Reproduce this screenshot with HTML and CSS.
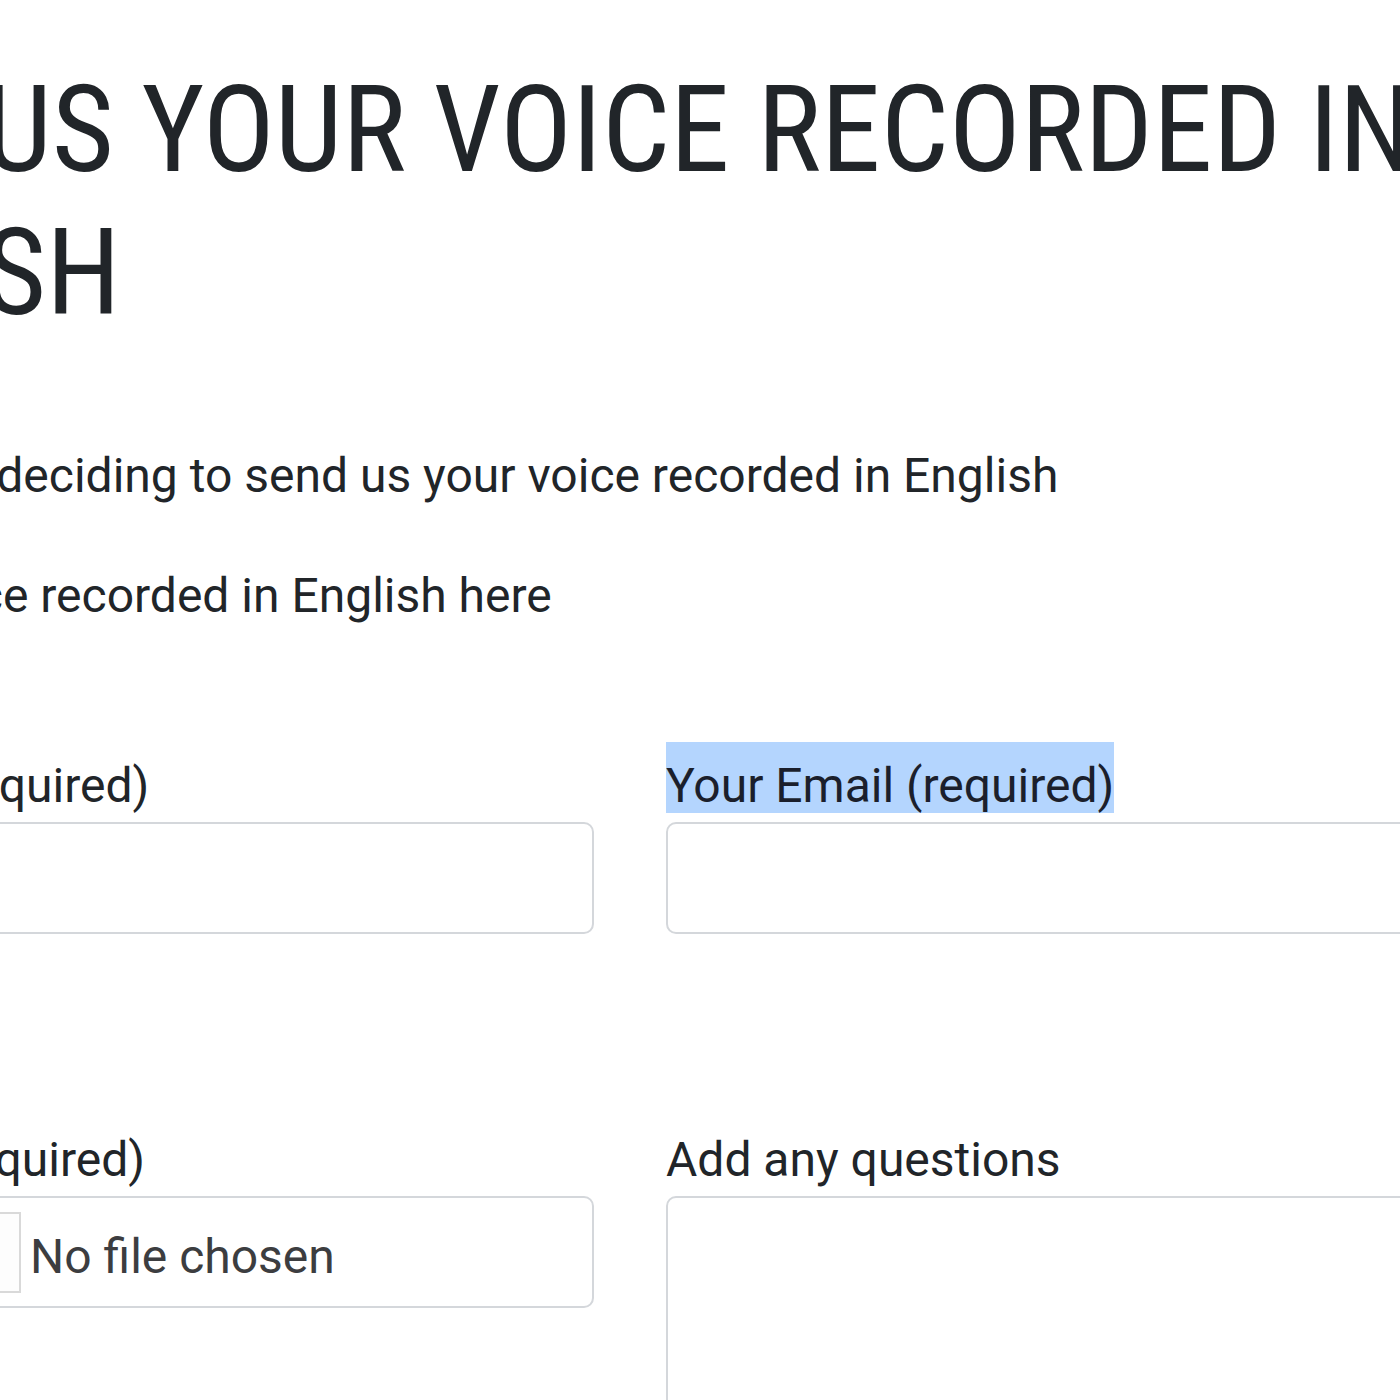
FILE: index.html
```html
<!DOCTYPE html>
<html lang="en">
<head>
<meta charset="utf-8">
<title>Send us your voice recorded in English</title>
<link rel="stylesheet" href="styles.css">
</head>
<body>
<main class="page">
  <h1 class="title">SEND US YOUR VOICE RECORDED IN ENGLISH</h1>
  <p class="intro intro-first">Thank you for deciding to send us your voice recorded in English</p>
  <p class="intro">Send your voice recorded in English here</p>
  <form class="form-grid">
    <div class="field">
      <label class="field-label">Your Name (required)</label>
      <div class="control"></div>
    </div>
    <div class="field">
      <label class="field-label"><span class="selected">Your Email (required)</span></label>
      <div class="control"></div>
    </div>
    <div class="field">
      <label class="field-label">Your Audio (required)</label>
      <div class="control file-control">
        <span class="file-btn">Choose File</span>
        <span class="file-name">No file chosen</span>
      </div>
    </div>
    <div class="field">
      <label class="field-label">Add any questions</label>
      <div class="control textarea"></div>
    </div>
  </form>
</main>
</body>
</html>
```
FILE: styles.css
```css
html, body {
  margin: 0;
  padding: 0;
  overflow: hidden;
  background: #ffffff;
}
body {
  color: #212529;
  font-family: Roboto, "Liberation Sans", sans-serif;
}
.page {
  margin-left: -308px;
  width: 1900px;
  padding-top: 59px;
}
.title {
  margin: 0;
  font-family: "Roboto Condensed", "Liberation Sans Narrow", Roboto, sans-serif;
  font-stretch: condensed;
  font-weight: 400;
  font-size: 120px;
  line-height: 143px;
  width: 1760px;
  color: #212529;
}
.intro {
  margin: 0;
  font-size: 48px;
  line-height: 72px;
}
.intro-first {
  margin-top: 95px;
  margin-bottom: 48px;
}
.form-grid {
  margin-top: 110px;
  display: grid;
  grid-template-columns: 902px 902px;
  column-gap: 72px;
  row-gap: 182px;
}
.field {
  display: flex;
  flex-direction: column;
  align-items: flex-start;
}
.field-label {
  display: inline-block;
  font-size: 48px;
  line-height: 58px;
  padding-top: 15px;
  height: 56px;
  margin-bottom: 9px;
}
.selected {
  display: inline-block;
  background: #b4d5fe;
  color: #1b1f2c;
  margin-top: -15px;
  padding-top: 15px;
  height: 56px;
  line-height: 58px;
}
.control {
  box-sizing: border-box;
  width: 100%;
  height: 112px;
  border: 2px solid #d4d7db;
  border-radius: 10px;
  background: #fff;
}
.textarea {
  height: 400px;
}
.file-control {
  display: flex;
  align-items: center;
  padding-left: 21px;
  gap: 9px;
}
.file-btn {
  box-sizing: border-box;
  width: 306px;
  height: 81px;
  border: 2px solid #d9d9d9;
  background: #fdfdfd;
  font-size: 44px;
  color: #222;
  display: flex;
  align-items: center;
  justify-content: center;
}
.file-name {
  font-size: 48px;
  color: #3c3d40;
  padding-top: 8px;
}
```
